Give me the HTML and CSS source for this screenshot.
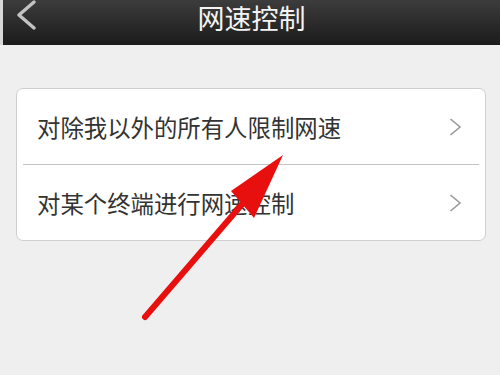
FILE: index.html
```html
<!DOCTYPE html>
<html lang="zh-CN">
<head>
    <meta charset="UTF-8">
    <meta name="viewport" content="width=device-width, initial-scale=1.0">
    <title>网速控制</title>
    <link rel="stylesheet" href="styles.css">
</head>
<body>

    <div class="top-bar">
        <span class="back">
            <svg width="22" height="30" viewBox="0 0 22 30">
                <polyline points="19,2 4,15 19,28" fill="none" stroke="#c2c2c2" stroke-width="3.4" stroke-linecap="round" stroke-linejoin="round"/>
            </svg>
        </span>
        <h1>网速控制</h1>
    </div>

    <div class="content">
        <div class="menu-card">
            <div class="menu-item">
                <span>对除我以外的所有人限制网速</span>
                <svg class="chevron" width="13" height="18" viewBox="0 0 13 18">
                    <polyline points="1.5,1 11,9 1.5,17" fill="none" stroke="#999" stroke-width="1.6"/>
                </svg>
            </div>
            <div class="divider"></div>
            <div class="menu-item">
                <span>对某个终端进行网速控制</span>
                <svg class="chevron" width="13" height="18" viewBox="0 0 13 18">
                    <polyline points="1.5,1 11,9 1.5,17" fill="none" stroke="#999" stroke-width="1.6"/>
                </svg>
            </div>
        </div>
    </div>

    <!-- marcação vermelha por cima da tela -->
    <svg class="red-arrow" width="500" height="375" viewBox="0 0 500 375">
        <line x1="145" y1="317" x2="244" y2="202" stroke="#e8100f" stroke-width="6" stroke-linecap="round"/>
        <polygon points="283,155 231,191 254,218" fill="#e8100f"/>
    </svg>

</body>
</html>
```

FILE: styles.css
```css
body {
    font-family: "Noto Sans CJK SC", "Noto Sans", sans-serif;
    background-color: #efefef;
    margin: 0;
    padding: 0;
    width: 500px;
    height: 375px;
    overflow: hidden;
    position: relative;
}

.top-bar {
    height: 45px;
    background: linear-gradient(#3c3c3c, #1b1b1b);
    display: flex;
    align-items: flex-start;
    justify-content: center;
    position: relative;
    border-left: 3px solid #d8d8d8;
}

.top-bar h1 {
    margin: 0;
    padding-top: 1px;
    font-size: 27px;
    font-weight: normal;
    color: #f4f4f4;
    line-height: 34px;
}

.back {
    position: absolute;
    left: 12px;
    top: 0;
}

.content {
    padding: 43px 14px 0 16px;
}

.menu-card {
    background-color: #fff;
    border: 1px solid #cfcfcf;
    border-radius: 7px;
}

.menu-item {
    height: 75px;
    display: flex;
    align-items: center;
    justify-content: space-between;
    padding: 0 23px 0 20px;
    font-size: 23.4px;
    color: #333;
}

.divider {
    height: 1px;
    margin: 0 6px;
    background-color: #c4c4c4;
}

.red-arrow {
    position: absolute;
    left: 0;
    top: 0;
}
```
